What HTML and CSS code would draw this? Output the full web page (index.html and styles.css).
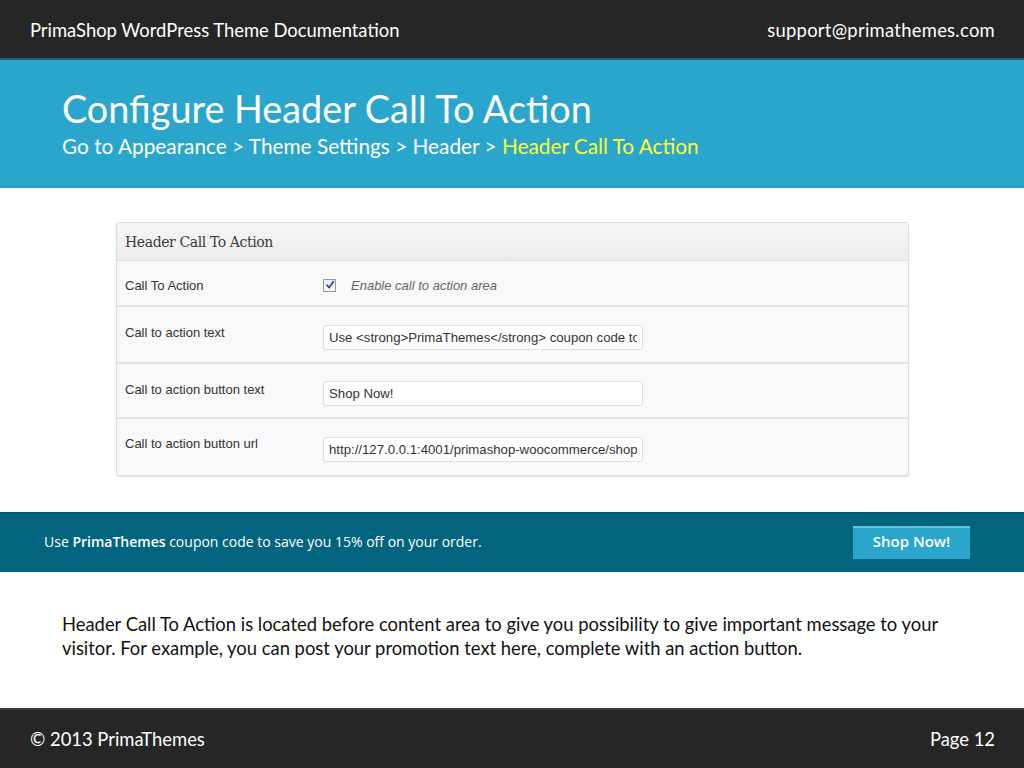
FILE: index.html
```html
<!DOCTYPE html>
<html>
<head>
    <title>Configure Header Call To Action</title>
    <link rel="stylesheet" href="styles.css">
</head>
<body>
    <div class="slide">
        <div class="topbar">
            <span>PrimaShop WordPress Theme Documentation</span>
            <span class="email">support@primathemes.com</span>
        </div>

        <div class="title-band">
            <h1>Configure Header Call To Action</h1>
            <div class="crumbs">Go to Appearance &gt; Theme Settings &gt; Header &gt; <span class="current">Header Call To Action</span></div>
        </div>

        <div class="content">
            <div class="wp-panel">
                <div class="wp-panel-head">Header Call To Action</div>
                <div class="wp-row row-check">
                    <div class="wp-label">Call To Action</div>
                    <div class="wp-field">
                        <span class="checkbox">
                            <svg width="10" height="10" viewBox="0 0 10 10"><path d="M2 5.2 L4.2 7.6 L8.4 1.6" fill="none" stroke="#2d4a8a" stroke-width="1.7" stroke-linecap="round" stroke-linejoin="round"/></svg>
                        </span>
                        <span class="desc">Enable call to action area</span>
                    </div>
                </div>
                <div class="wp-row row-text">
                    <div class="wp-label">Call to action text</div>
                    <div class="wp-field"><input class="wp-input" type="text" readonly value="Use <strong>PrimaThemes</strong> coupon code to save you 15% off on your order."></div>
                </div>
                <div class="wp-row row-btn">
                    <div class="wp-label">Call to action button text</div>
                    <div class="wp-field"><input class="wp-input" type="text" readonly value="Shop Now!"></div>
                </div>
                <div class="wp-row row-url">
                    <div class="wp-label">Call to action button url</div>
                    <div class="wp-field"><input class="wp-input" type="text" readonly value="http://127.0.0.1:4001/primashop-woocommerce/shop/"></div>
                </div>
            </div>
        </div>

        <div class="cta-band">
            <div class="cta-text">Use <strong>PrimaThemes</strong> coupon code to save you 15% off on your order.</div>
            <a class="cta-button" href="#">Shop Now!</a>
        </div>

        <div class="description">
            <p>Header Call To Action is located before content area to give you possibility to give important message to your visitor. For example, you can post your promotion text here, complete with an action button.</p>
        </div>

        <div class="footer">
            <span>&copy; 2013 PrimaThemes</span>
            <span>Page 12</span>
        </div>
    </div>
</body>
</html>
```

FILE: styles.css
```css
* {
    margin: 0;
    padding: 0;
    box-sizing: border-box;
}

body {
    font-family: 'Lato', 'Open Sans', sans-serif;
    background: #fff;
    color: #111;
}

.slide {
    width: 1024px;
    height: 768px;
    display: flex;
    flex-direction: column;
    overflow: hidden;
}

.topbar {
    height: 60px;
    background: #262626;
    border-bottom: 2px solid #1c5e78;
    color: #fff;
    display: flex;
    align-items: center;
    justify-content: space-between;
    padding: 2px 29px 0 30px;
    font-size: 18.4px;
}

.topbar .email {
    letter-spacing: 0.28px;
}

.title-band {
    height: 128px;
    background: #2aa6cc;
    border-bottom: 2px solid #2a9dc2;
    padding: 27px 62px 0;
    color: #fff;
}

h1 {
    font-weight: 400;
    font-size: 37.8px;
    line-height: 44px;
}

.crumbs {
    font-size: 20.8px;
    line-height: 28px;
    margin-top: 1px;
}

.crumbs .current {
    color: #ffff33;
}

.content {
    height: 324px;
    padding: 34px 0 0 116px;
}

.wp-panel {
    width: 793px;
    border: 1px solid #dcdcdc;
    border-radius: 3px;
    background: #f9f9f9;
    box-shadow: 0 1px 2px rgba(0, 0, 0, 0.12);
    font-family: 'Liberation Sans', Arial, sans-serif;
    font-size: 13px;
    color: #333;
}

.wp-panel-head {
    height: 38px;
    line-height: 38px;
    padding-left: 8px;
    background: linear-gradient(#f6f6f6, #ececec);
    border-bottom: 1px solid #dfdfdf;
    font-family: 'DejaVu Serif', 'Liberation Serif', serif;
    font-size: 14px;
    color: #3a3a3a;
    letter-spacing: -0.4px;
}

.wp-row {
    display: flex;
    border-bottom: 2px solid #e4e4e4;
    padding-left: 8px;
}

.wp-row:last-child {
    border-bottom: none;
}

.row-check { height: 46px; align-items: center; padding-top: 4px; }
.row-text { height: 57px; padding-top: 18px; }
.row-btn { height: 55px; padding-top: 18px; }
.row-url { height: 56px; padding-top: 17px; }

.wp-label {
    width: 198px;
}

.wp-field {
    display: flex;
    align-items: center;
}

.checkbox {
    width: 13px;
    height: 13px;
    border: 1px solid #9a9a9a;
    background: linear-gradient(#e8e8ee, #fdfdfd);
    display: flex;
    align-items: center;
    justify-content: center;
    margin-right: 15px;
}

.desc {
    font-style: italic;
    color: #666;
}

.wp-input {
    width: 320px;
    height: 25px;
    border: 1px solid #dfdfdf;
    border-radius: 3px;
    background: #fff;
    padding: 0 5px;
    font-family: 'Liberation Sans', Arial, sans-serif;
    font-size: 13.2px;
    color: #333;
    outline: none;
    margin-top: -12px;
}

.cta-band {
    height: 60px;
    background: #02647f;
    border-top: 1px solid #0a5670;
    display: flex;
    align-items: center;
    justify-content: space-between;
    padding: 0 54px 0 44px;
    color: #fff;
    font-family: 'Open Sans', sans-serif;
    font-size: 14px;
}

.cta-text {
    margin-top: -3px;
}

.cta-text strong {
    font-weight: 600;
}

.cta-button {
    display: block;
    width: 117px;
    height: 33px;
    line-height: 27px;
    text-align: center;
    background: #2aa6cc;
    border-top: 2px solid #6cc3de;
    color: #fff;
    text-decoration: none;
    font-weight: 600;
    font-size: 15px;
}

.description {
    flex: 1;
    padding: 40px 62px 0;
    font-size: 18.4px;
    line-height: 24px;
    color: #111;
}

.footer {
    height: 60px;
    background: #262626;
    border-top: 2px solid #3d3d3d;
    color: #fff;
    display: flex;
    align-items: center;
    justify-content: space-between;
    padding: 0 29px 0 30px;
    font-size: 18.4px;
}
```
